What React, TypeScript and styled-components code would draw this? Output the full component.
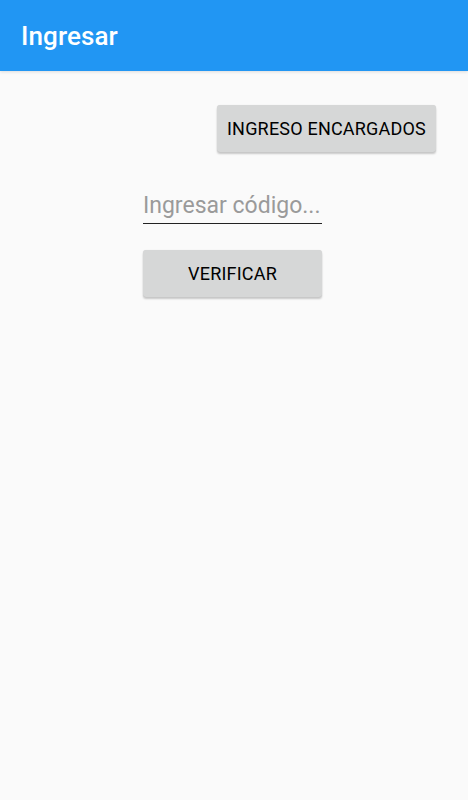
import React from 'react';
import styled, { createGlobalStyle } from 'styled-components';

const GlobalStyle = createGlobalStyle`
  html, body {
    margin: 0;
    padding: 0;
    background: #fafafa;
    font-family: Roboto, "Noto Sans", sans-serif;
  }
`;

const Screen = styled.div`
  width: 468px;
  height: 800px;
  background: #fafafa;
  display: flex;
  flex-direction: column;
`;

const AppBar = styled.header`
  height: 71px;
  background: #2196f3;
  display: flex;
  align-items: center;
  padding: 0 21px;
  box-sizing: border-box;
  box-shadow: 0 1px 3px rgba(0, 0, 0, 0.12);
`;

const Title = styled.h1`
  margin: 0;
  color: #fff;
  font-size: 26px;
  font-weight: 500;
  letter-spacing: 0.1px;
`;

const Body = styled.main`
  display: flex;
  flex-direction: column;
  padding: 34px 32px 0 29px;
`;

const TopRow = styled.div`
  display: flex;
  justify-content: flex-end;
`;

const RaisedButton = styled.button<{ $width?: number }>`
  height: 47px;
  ${(p) => (p.$width ? `width: ${p.$width}px;` : 'padding: 0 10px;')}
  border: none;
  border-radius: 3px;
  background: #d6d7d7;
  color: #000;
  font-family: Roboto, "Noto Sans", sans-serif;
  font-size: 18px;
  font-weight: 400;
  letter-spacing: 0.2px;
  box-shadow: 0 2px 2px rgba(0, 0, 0, 0.2), 0 0 1px rgba(0, 0, 0, 0.12);
  cursor: pointer;
`;

const Form = styled.div`
  margin-top: 36px;
  display: flex;
  flex-direction: column;
  align-items: center;
  gap: 26px;
`;

const CodeInput = styled.input`
  width: 179px;
  box-sizing: border-box;
  border: none;
  border-bottom: 1px solid #222;
  background: transparent;
  padding: 0 0 1px 0;
  height: 36px;
  font-family: Roboto, "Noto Sans", sans-serif;
  font-size: 23px;
  color: #222;
  outline: none;

  &::placeholder {
    color: #9a9a9a;
  }
`;

export default function App() {
  return (
    <>
      <GlobalStyle />
      <Screen>
        <AppBar>
          <Title>Ingresar</Title>
        </AppBar>
        <Body>
          <TopRow>
            <RaisedButton $width={219}>INGRESO ENCARGADOS</RaisedButton>
          </TopRow>
          <Form>
            <CodeInput placeholder="Ingresar código..." />
            <RaisedButton $width={179}>VERIFICAR</RaisedButton>
          </Form>
        </Body>
      </Screen>
    </>
  );
}
